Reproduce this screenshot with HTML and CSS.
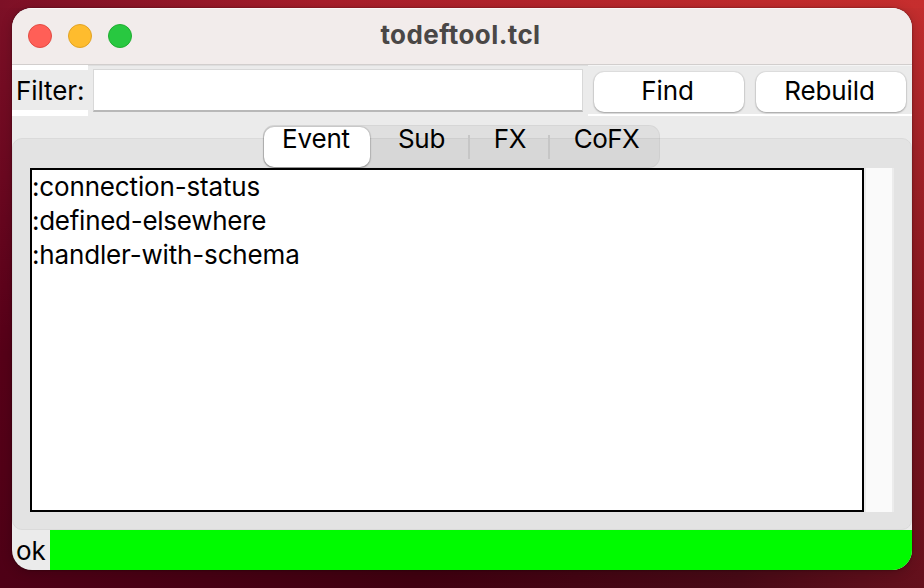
FILE: index.html
```html
<!DOCTYPE html>
<html lang="en">
<head>
<meta charset="utf-8">
<title>todeftool.tcl</title>
<link rel="stylesheet" href="styles.css">
</head>
<body>
<main class="window">
  <header class="titlebar">
    <div class="lights"><i class="light close"></i><i class="light minimize"></i><i class="light zoom"></i></div>
    <h1 class="title">todeftool.tcl</h1>
  </header>
  <section class="toolbar">
    <label class="filter-label" for="filter"><span>Filter:</span></label>
    <div class="entry-cell"><input class="entry" id="filter" type="text"></div>
    <div class="buttons">
      <button class="button find">Find</button>
      <button class="button rebuild">Rebuild</button>
    </div>
  </section>
  <section class="notebook">
    <nav class="tabs">
      <span class="tab active">Event</span>
      <span class="tab sub">Sub</span>
      <span class="tab fx">FX</span>
      <span class="tab cofx">CoFX</span>
    </nav>
    <div class="pane">
      <ul class="list">
        <li class="l1">:connection-status</li>
        <li class="l2">:defined-elsewhere</li>
        <li class="l3">:handler-with-schema</li>
      </ul>
      <div class="scrollbar"></div>
    </div>
  </section>
  <footer class="status"><span class="status-text">ok</span><div class="status-bar"></div></footer>
</main>
</body>
</html>
```
FILE: styles.css
```css
* { box-sizing: border-box; }
body {
  margin: 0;
  width: 924px;
  height: 588px;
  padding: 8px 12px 18px;
  overflow: hidden;
  font: 400 26px/34px Inter, "Liberation Sans", sans-serif;
  color: #000;
  background:
    linear-gradient(to right, #7d1026, #a81e2b 35%, #c22c2d 85%, #c62e2e) 0 0 / 100% 8px no-repeat,
    linear-gradient(to right, #4e0016, #400010 45%, #480a16 80%, #64101c) 0 100% / 100% 18px no-repeat,
    linear-gradient(to bottom, #c42e2e, #a32328 25%, #85161f 55%, #64101c) 100% 0 / 40px 100% no-repeat,
    linear-gradient(to bottom, #7d1026, #6b0820 30%, #560018 60%, #4e0016);
}
.window {
  display: flex;
  flex-direction: column;
  width: 900px;
  height: 562px;
  overflow: hidden;
  border-radius: 20px;
  background: #ebebeb;
  box-shadow: 0 0 2px rgba(0, 0, 0, .5), 0 2px 12px rgba(0, 0, 0, .2);
}
.titlebar {
  display: grid;
  grid-template-columns: 140px 1fr 140px;
  align-items: center;
  height: 57px;
  flex: none;
  background: #f2eceb;
  border-bottom: 1px solid #d2cecd;
  box-shadow: inset 0 1px #faf7f7;
}
.lights { display: flex; gap: 16px; padding-left: 16px; }
.light { width: 24px; height: 24px; border-radius: 50%; border: 1px solid; }
.close { background: #ff5f57; border-color: #e24b43; }
.minimize { background: #febc2e; border-color: #e1a325; }
.zoom { background: #28c840; border-color: #20ad31; }
.title {
  grid-column: 2;
  margin: 0;
  padding: 0 3px 2px 0;
  font-size: 26px;
  font-weight: 700;
  line-height: 34px;
  letter-spacing: .4px;
  text-align: center;
  color: #4a4746;
  white-space: nowrap;
}
.toolbar { display: flex; height: 51px; flex: none; }
.filter-label {
  width: 76px;
  border-top: 5px solid #fff;
  border-bottom: 6px solid #fff;
  padding: 4px 0 0 4px;
  letter-spacing: -.1px;
  white-space: nowrap;
}
.entry-cell { width: 500px; padding: 3px 5px 0; border-top: 1px solid #dedede; }
.entry {
  display: block;
  width: 490px;
  height: 43px;
  padding: 0 6px;
  border: 1px solid #d8d8d8;
  border-bottom: 2px solid #b8b8b8;
  background: #fff;
  font: inherit;
  outline: 0;
}
.buttons {
  display: flex;
  gap: 12px;
  flex: 1;
  padding: 6px 6px 0;
  border-top: 1px solid #f5f5f5;
  border-bottom: 2px solid #fff;
}
.button {
  width: 150px;
  height: 40px;
  padding: 0 3px 2px 0;
  border: 0;
  border-radius: 10px;
  background: #fff;
  box-shadow: 0 0 1px 1px rgba(0, 0, 0, .06), 0 1px 2px rgba(0, 0, 0, .28);
  font: inherit;
  letter-spacing: -.1px;
  color: #000;
}
.notebook {
  position: relative;
  height: 414px;
  padding: 9px 18px 0;
}
.notebook::before {
  content: "";
  position: absolute;
  inset: 22px 0 0;
  border: 1px solid #dadada;
  border-radius: 10px;
  background: #e3e3e3;
}
.tabs {
  position: relative;
  display: flex;
  width: 397px;
  height: 43px;
  margin-left: 233px;
  border: 1px solid rgba(0, 0, 0, .04);
  border-radius: 11px;
  background: rgba(0, 0, 0, .05);
}
.tab { position: relative; height: 40px; line-height: 26px; text-align: center; white-space: nowrap; }
.active {
  width: 106px;
  margin-top: 1px;
  padding-right: 2px;
  line-height: 24px;
  letter-spacing: -.2px;
  border-radius: 10px;
  background: #fff;
  box-shadow: 0 0 1px 1px rgba(0, 0, 0, .1), 0 1px 2px rgba(0, 0, 0, .28);
}
.sub { width: 100px; padding-left: 3px; letter-spacing: -.3px; }
.fx { width: 80px; letter-spacing: -.4px; }
.cofx { width: 109px; padding-left: 4px; letter-spacing: -.6px; }
.sub::after, .fx::after {
  content: "";
  position: absolute;
  right: 0;
  top: 9px;
  width: 2px;
  height: 24px;
  background: #c6c6c6;
}
.pane { position: relative; display: flex; height: 344px; }
.list {
  width: 834px;
  margin: 0;
  padding: 0;
  border: 2px solid #000;
  background: #fff;
  list-style: none;
}
.list li { height: 34px; white-space: nowrap; }
.l1 { letter-spacing: -.16px; }
.l2 { letter-spacing: -.27px; }
.l3 { letter-spacing: -.16px; }
.scrollbar {
  width: 30px;
  background: #fafafa;
  border: solid #ececec;
  border-width: 0 2px;
}
.status { display: flex; height: 40px; flex: none; }
.status-text { width: 38px; padding: 4px 0 0 4px; letter-spacing: -.2px; }
.status-bar { flex: 1; background: #00fb00; }
```
